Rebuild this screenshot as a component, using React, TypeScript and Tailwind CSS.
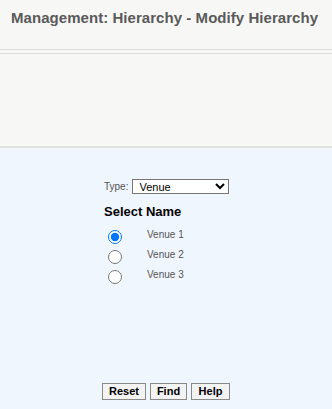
import React from "react";

export default function App() {
  const venues = ["Venue 1", "Venue 2", "Venue 3"];
  return (
    <div className="w-[332px] h-[409px] flex flex-col bg-[#f0f6fe] font-['Liberation_Sans',Arial,sans-serif] overflow-hidden">
      <div className="h-[50px] bg-[#f7f7f5] border-b border-[#dcdcdc] pl-[11px] pt-[8px]">
        <h1 className="text-[15px] font-bold text-[#5a5a5a] leading-[20px] tracking-[0.05px]">Management: Hierarchy - Modify Hierarchy</h1>
      </div>
      <div className="h-[3px] bg-[#f7f7f5]" />
      <div className="h-[95px] bg-[#f7f7f5] border-t border-[#dcdcdc] border-b-2 border-b-[#e2e2de]" />
      <div className="flex-1 flex flex-col items-center pt-[31px]">
        <div className="w-[130px] ml-[6px] flex flex-col">
          <div className="flex items-center gap-[4px]">
            <span className="text-[10px] text-[#555]">Type:</span>
            <select className="w-[97px] h-[15px] text-[11px] border border-[#767676] bg-white text-black px-[2px]" defaultValue="Venue">
              <option>Venue</option>
            </select>
          </div>
          <div className="text-[13px] font-bold text-black mt-[10px] leading-[16px]">Select Name</div>
          <div className="flex flex-col mt-[5px]">
            {venues.map((v, i) => (
              <label key={v} className="flex items-start h-[20px]">
                <input type="radio" name="venue" defaultChecked={i === 0} className="w-[14px] h-[14px] ml-[4px] mr-0 mt-[5px]" />
                <span className="text-[10px] text-[#555] ml-[25px] leading-[20px]">{v}</span>
              </label>
            ))}
          </div>
        </div>
        <div className="mt-auto mb-[9px] flex gap-[4px]">
          <button className="h-[17px] w-[44px] border border-[#8a8a8a] bg-[#f3f3f3] text-[11px] font-bold leading-none text-black">Reset</button>
          <button className="h-[17px] w-[37px] border border-[#8a8a8a] bg-[#f3f3f3] text-[11px] font-bold leading-none text-black">Find</button>
          <button className="h-[17px] w-[39px] border border-[#8a8a8a] bg-[#f3f3f3] text-[11px] font-bold leading-none text-black">Help</button>
        </div>
      </div>
    </div>
  );
}
